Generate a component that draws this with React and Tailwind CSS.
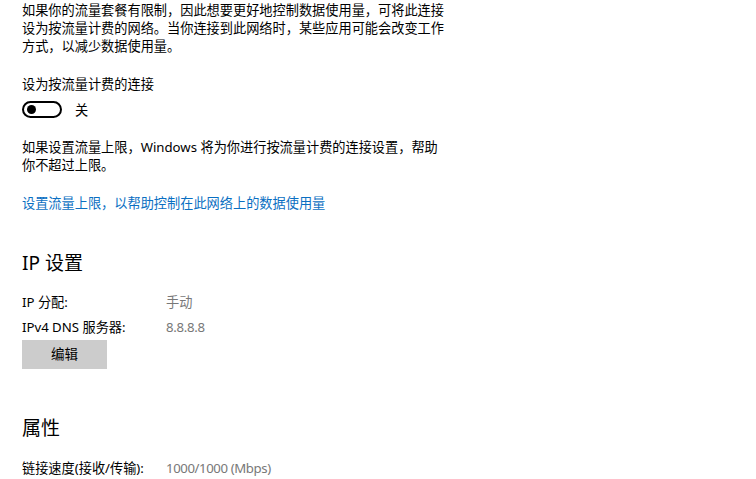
export default function App() {
  return (
    <div className="w-[756px] h-[479px] bg-white overflow-hidden text-black font-['Noto_Sans','Noto_Sans_CJK_SC',sans-serif]">
      <div className="pl-[22px]">
        <p className="pt-[1px] text-[13.2px] leading-[18px] whitespace-nowrap">
          如果你的流量套餐有限制，因此想要更好地控制数据使用量，可将此连接
          <br />
          设为按流量计费的网络。当你连接到此网络时，某些应用可能会改变工作
          <br />
          方式，以减少数据使用量。
        </p>
        <p className="mt-[20px] text-[13.2px] leading-[18px]">设为按流量计费的连接</p>
        <div className="mt-[8px] flex items-center h-[17px]">
          <div className="w-[40px] h-[17px] rounded-full border-2 border-black flex items-center pl-[3px]">
            <div className="w-[9px] h-[9px] rounded-full bg-black" />
          </div>
          <span className="ml-[13px] text-[13.2px] leading-[18px]">关</span>
        </div>
        <p className="mt-[20px] text-[13.2px] leading-[18px] whitespace-nowrap">
          如果设置流量上限，Windows 将为你进行按流量计费的连接设置，帮助
          <br />
          你不超过上限。
        </p>
        <p className="mt-[20px] text-[13.2px] leading-[18px] text-[#0a6fc2]">
          设置流量上限，以帮助控制在此网络上的数据使用量
        </p>
        <h2 className="mt-[37px] text-[19px] leading-[28px]">IP 设置</h2>
        <div className="mt-[13px] flex text-[13.2px] leading-[25px]">
          <span className="w-[144px]">IP 分配:</span>
          <span className="text-[#787878]">手动</span>
        </div>
        <div className="flex text-[13.2px] leading-[25px]">
          <span className="w-[144px]">IPv4 DNS 服务器:</span>
          <span className="text-[#787878] tracking-[-0.3px]">8.8.8.8</span>
        </div>
        <button className="w-[85px] h-[29px] bg-[#cccccc] text-[13.5px] flex items-center justify-center">
          编辑
        </button>
        <h2 className="mt-[45px] text-[19px] leading-[28px]">属性</h2>
        <div className="mt-[14px] flex text-[13.2px] leading-[25px]">
          <span className="w-[144px]">链接速度(接收/传输):</span>
          <span className="text-[#787878] tracking-[-0.4px]">1000/1000 (Mbps)</span>
        </div>
      </div>
    </div>
  );
}
